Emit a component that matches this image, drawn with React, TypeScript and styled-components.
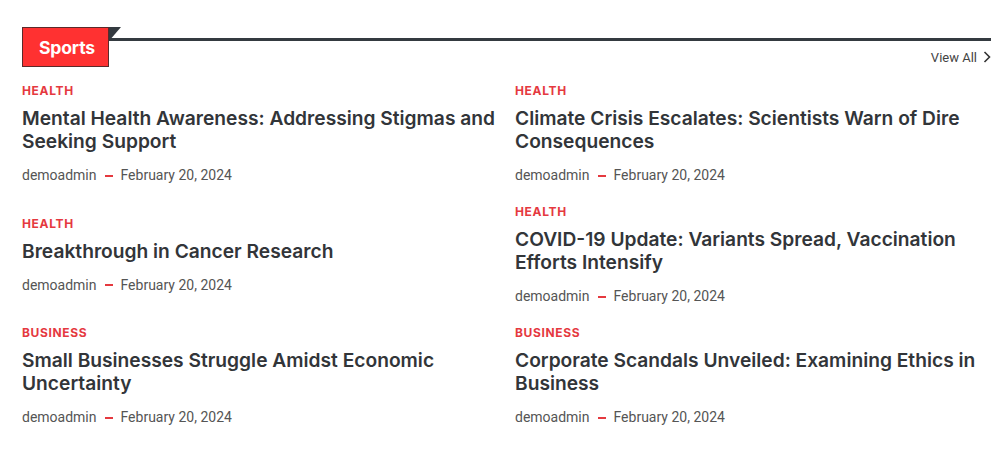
import styled, { createGlobalStyle } from "styled-components";

const posts = [
  { cat: "HEALTH", title: "Mental Health Awareness: Addressing Stigmas and Seeking Support" },
  { cat: "HEALTH", title: "Climate Crisis Escalates: Scientists Warn of Dire Consequences" },
  { cat: "HEALTH", title: "Breakthrough in Cancer Research" },
  { cat: "HEALTH", title: "COVID-19 Update: Variants Spread, Vaccination Efforts Intensify" },
  { cat: "BUSINESS", title: "Small Businesses Struggle Amidst Economic Uncertainty" },
  { cat: "BUSINESS", title: "Corporate Scandals Unveiled: Examining Ethics in Business" },
];

const App = () => {
  return (
    <>
      <GlobalStyle />
      <Section>
        <Header>
          <Badge>Sports</Badge>
          <Rule />
        </Header>
        <ViewAll>
          View All
          <svg width="8" height="12" viewBox="0 0 8 12">
            <path d="M1.5 1 L6.5 6 L1.5 11" fill="none" stroke="#333" strokeWidth="1.6" />
          </svg>
        </ViewAll>
        <Grid>
          {posts.map((p, i) => (
            <Item key={i}>
              <Category>{p.cat}</Category>
              <Title>{p.title}</Title>
              <Meta>
                demoadmin
                <Dash />
                February 20, 2024
              </Meta>
            </Item>
          ))}
        </Grid>
      </Section>
    </>
  );
};
export default App;

const GlobalStyle = createGlobalStyle`
  body {
    margin: 0;
    background: #fff;
    font-family: Inter, "Liberation Sans", sans-serif;
  }
`;

const Section = styled.div`
  padding: 27px 15px 0 22px;
`;

const Header = styled.div`
  display: flex;
  align-items: flex-start;
`;

const Badge = styled.div`
  position: relative;
  box-sizing: border-box;
  width: 87px;
  height: 40px;
  padding-left: 3px;
  background: #ff3131;
  border: 1px solid #5b2a2a;
  color: #fff;
  font-weight: 700;
  font-size: 17.6px;
  display: flex;
  align-items: center;
  justify-content: center;
  letter-spacing: -0.2px;

  &::after {
    content: "";
    position: absolute;
    left: 86px;
    top: -1px;
    border-top: 14px solid #343a40;
    border-right: 12px solid transparent;
  }
`;

const Rule = styled.div`
  flex: 1;
  height: 3px;
  margin-top: 11px;
  background: #343a40;
`;

const ViewAll = styled.div`
  display: flex;
  justify-content: flex-end;
  align-items: center;
  gap: 6px;
  margin-top: -19px;
  font-family: Roboto, "Liberation Sans", sans-serif;
  font-size: 13px;
  color: #444;
  height: 18px;
`;

const Grid = styled.div`
  display: grid;
  grid-template-columns: 1fr 1fr;
  column-gap: 17px;
  row-gap: 17px;
  align-items: center;
  margin-top: 16px;
`;

const Item = styled.div`
  display: flex;
  flex-direction: column;
`;

const Category = styled.div`
  font-size: 12px;
  font-weight: 700;
  letter-spacing: 0.65px;
  line-height: 17px;
  color: #e5393f;
  margin-bottom: 8px;
`;

const Title = styled.div`
  font-size: 19.2px;
  font-weight: 600;
  line-height: 23px;
  color: #323539;
`;

const Meta = styled.div`
  display: flex;
  align-items: center;
  font-family: Roboto, "Liberation Sans", sans-serif;
  font-size: 14px;
  line-height: 21px;
  color: #555;
  margin-top: 12px;
`;

const Dash = styled.span`
  display: inline-block;
  width: 8px;
  height: 2px;
  background: #e5393f;
  margin: 0 8px;
`;
